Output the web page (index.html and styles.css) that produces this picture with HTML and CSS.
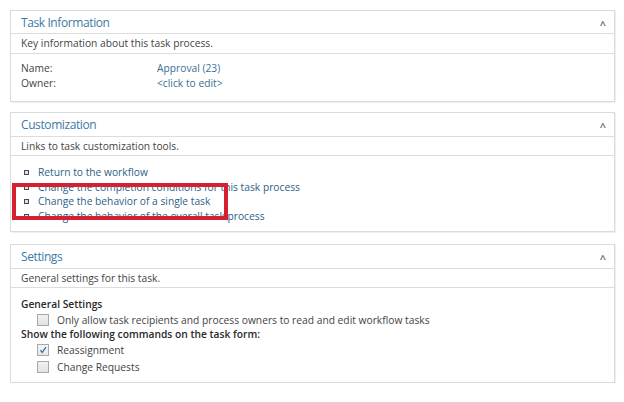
FILE: index.html
```html
<!DOCTYPE html>
<html>
<head>
<meta charset="utf-8">
<link rel="stylesheet" href="styles.css">
</head>
<body>
<div class="page">
  <section class="panel p1">
    <div class="head"><span class="title">Task Information</span><span class="chev">&#94;</span></div>
    <div class="sub">Key information about this task process.</div>
    <div class="body info">
      <div class="row"><span class="lbl">Name:</span><span class="val">Approval (23)</span></div>
      <div class="row"><span class="lbl">Owner:</span><span class="val">&lt;click to edit&gt;</span></div>
    </div>
  </section>

  <section class="panel p2">
    <div class="head"><span class="title">Customization</span><span class="chev">&#94;</span></div>
    <div class="sub">Links to task customization tools.</div>
    <div class="body links">
      <div class="link"><span class="bullet"></span>Return to the workflow</div>
      <div class="link"><span class="bullet"></span>Change the completion conditions for this task process</div>
      <div class="link"><span class="bullet"></span>Change the behavior of a single task</div>
      <div class="link"><span class="bullet"></span>Change the behavior of the overall task process</div>
      <div class="highlight"></div>
    </div>
  </section>

  <section class="panel p3">
    <div class="head"><span class="title">Settings</span><span class="chev">&#94;</span></div>
    <div class="sub">General settings for this task.</div>
    <div class="body settings">
      <div class="group">General Settings</div>
      <div class="opt"><span class="cb"></span>Only allow task recipients and process owners to read and edit workflow tasks</div>
      <div class="group">Show the following commands on the task form:</div>
      <div class="opt"><span class="cb checked"><svg viewBox="0 0 12 12" width="12" height="12"><path d="M3 6.2 L5 9 L9.5 2.5" fill="none" stroke="#3a5f8a" stroke-width="1.4"/></svg></span>Reassignment</div>
      <div class="opt last"><span class="cb"></span>Change Requests</div>
    </div>
  </section>
</div>
</body>
</html>
```

FILE: styles.css
```css
html, body {
  margin: 0;
  padding: 0;
  background: #ffffff;
}
body {
  font-family: "Open Sans", "Noto Sans", "Liberation Sans", sans-serif;
  font-size: 10.25px;
  color: #444444;
}
.page {
  padding: 10px 9px 0 10px;
  display: flex;
  flex-direction: column;
}
.panel {
  border: 1px solid #dadada;
  box-shadow: 1px 1px 1px rgba(0,0,0,0.06);
  background: #fff;
}
.p2 { margin-top: 10px; }
.p3 { margin-top: 12px; }
.head {
  height: 22px;
  border-bottom: 1px solid #dcdcdc;
  display: flex;
  align-items: center;
  justify-content: space-between;
  padding: 0 8px 0 10px;
}
.p2 .head, .p3 .head { height: 23px; }
.title {
  font-size: 12px;
  color: #3c7aa5;
  letter-spacing: -0.4px;
}
.chev {
  font-size: 11px;
  font-weight: bold;
  color: #777;
  line-height: 1;
  padding-top: 4px;
}
.sub {
  height: 19px;
  line-height: 19px;
  padding-left: 10px;
  border-bottom: 1px solid #dcdcdc;
}
.p2 .sub, .p3 .sub { height: 18px; line-height: 18px; }
.body {
  position: relative;
}
.info {
  padding: 7px 0 10px 10px;
}
.row {
  display: flex;
  height: 15px;
  line-height: 15px;
}
.lbl { width: 136px; }
.val { color: #3a6f96; }
.links {
  padding: 9px 0 7px 13px;
}
.link {
  height: 14.7px;
  line-height: 14.7px;
  color: #2e5f86;
  display: flex;
  align-items: center;
}
.bullet {
  width: 3px;
  height: 3px;
  border: 1px solid #3d4b5a;
  margin-right: 9px;
  box-sizing: content-box;
  background: #dfe3e8;
}
.highlight {
  position: absolute;
  left: 1px;
  top: 27px;
  width: 208px;
  height: 29px;
  border: 4px solid #d42030;
}
.settings {
  padding: 9px 0 8px 10px;
}
.group {
  height: 15.5px;
  line-height: 15.5px;
  color: #2a2a2a;
  font-weight: 600;
}
.opt {
  height: 15px;
  display: flex;
  align-items: center;
  padding-left: 16px;
}
.opt.last { margin-top: 1.5px; }
.cb {
  width: 10px;
  height: 10px;
  border: 1px solid #a8a8a8;
  background: linear-gradient(#f2f2f2, #e2e2e2);
  margin-right: 8px;
  display: inline-flex;
  align-items: center;
  justify-content: center;
}
.cb svg { width: 10px; height: 10px; }
.cb.checked { background: linear-gradient(#f4f6f8, #e4e8ec); }
```
